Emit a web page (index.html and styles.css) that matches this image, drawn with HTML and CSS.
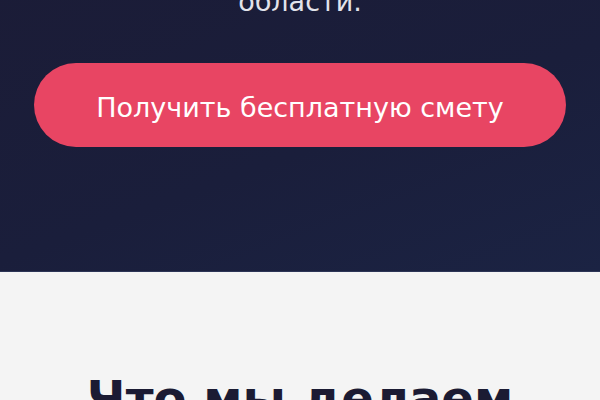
FILE: index.html
```html
<!DOCTYPE html>
<html lang="ru">
<head>
    <meta charset="UTF-8">
    <meta name="viewport" content="width=device-width, initial-scale=1.0">
    <title>Бесплатная смета</title>
    <link rel="stylesheet" href="styles.css">
</head>
<body>
    <header class="hero">
        <p class="hero-text">области.</p>
        <a class="hero-button" href="#estimate">Получить бесплатную смету</a>
    </header>

    <section class="services">
        <h2 class="services-title">Что мы делаем</h2>
    </section>
</body>
</html>
```

FILE: styles.css
```css
/* Base */
body {
    margin: 0;
    font-family: "DejaVu Sans", Verdana, sans-serif;
    background: #f4f4f4;
}

/* Dark hero block */
.hero {
    background: linear-gradient(160deg, #1b1c37 0%, #1a1e3b 55%, #1b2343 100%);
    padding: 0 34px 124px;
    text-align: center;
    border-bottom: 1px solid #2d3556;
}

.hero-text {
    margin: -16px 0 0;
    font-size: 27px;
    line-height: 36px;
    color: #e2e3eb;
}

/* Call to action */
.hero-button {
    display: block;
    margin-top: 43px;
    padding: 25px 40px 19px;
    font-size: 27px;
    line-height: 40px;
    color: #fff;
    text-decoration: none;
    background-color: #e84563;
    border-radius: 42px;
}

.hero-button:hover {
    background-color: #d93b58;
}

/* Services */
.services {
    padding: 98px 20px 40px;
    text-align: center;
}

.services-title {
    margin: 0;
    font-size: 48px;
    line-height: 1.2;
    font-weight: bold;
    color: #1b1b33;
}
```
